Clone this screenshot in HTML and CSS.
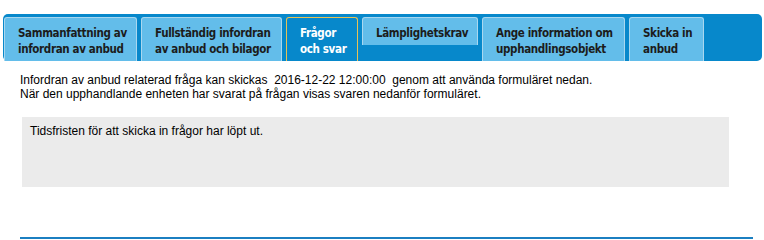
FILE: index.html
```html
<!DOCTYPE html>
<html lang="sv">
<head>
<meta charset="utf-8">
<title>Frågor och svar</title>
<link rel="stylesheet" href="styles.css">
</head>
<body>
<div class="page">
  <nav class="tabbar">
    <a class="tab tab-1" href="#">Sammanfattning av<br>infordran av anbud</a>
    <a class="tab tab-2" href="#">Fullständig infordran<br>av anbud och bilagor</a>
    <a class="tab tab-3 active" href="#">Frågor<br>och svar</a>
    <a class="tab tab-4" href="#">Lämplighetskrav</a>
    <a class="tab tab-5" href="#">Ange information om<br>upphandlingsobjekt</a>
    <a class="tab tab-6" href="#">Skicka in<br>anbud</a>
  </nav>
  <div class="content">
    <p class="intro">Infordran av anbud relaterad fråga kan skickas&nbsp; 2016-12-22 12:00:00&nbsp; genom att använda formuläret nedan.<br>När den upphandlande enheten har svarat på frågan visas svaren nedanför formuläret.</p>
    <div class="notice">Tidsfristen för att skicka in frågor har löpt ut.</div>
    <hr class="rule">
  </div>
</div>
</body>
</html>
```

FILE: styles.css
```css
html, body {
  margin: 0;
  padding: 0;
  background: #ffffff;
}

.page {
  width: 764px;
  padding-top: 14px;
  font-family: "Liberation Sans", Arial, sans-serif;
  font-size: 12px;
  color: #000;
}

.tabbar {
  display: flex;
  align-items: flex-start;
  gap: 4px;
  margin-left: 3px;
  width: 759px;
  box-sizing: border-box;
  padding: 3px 0 0 1px;
  background: #0788cb;
  border-radius: 5px;
}

.tab {
  box-sizing: border-box;
  display: block;
  overflow: hidden;
  padding: 7px 6px 4px 13px;
  background: #63bdea;
  border: 1px solid #a9d7ef;
  border-bottom: none;
  border-radius: 3px 3px 0 0;
  font-family: "DejaVu Sans Condensed", "DejaVu Sans", sans-serif;
  font-stretch: condensed;
  font-weight: bold;
  font-size: 11.5px;
  letter-spacing: -0.35px;
  line-height: 16px;
  color: #1c1c1c;
  text-decoration: none;
  white-space: nowrap;
}

.tab.active {
  background: #0788cb;
  border-color: #e9c254;
  color: #ffffff;
}

.tab-1 { width: 133px; }
.tab-2 { width: 141px; }
.tab-3 { width: 72px; }
.tab-4 { width: 116px; }
.tab-5 { width: 143px; }
.tab-6 { width: 75px; }

.content {
  padding: 12px 0 0 20px;
}

.intro {
  margin: 0;
  line-height: 14px;
}

.notice {
  margin: 16px 0 0 2px;
  width: 707px;
  height: 70px;
  box-sizing: border-box;
  padding: 7px 8px;
  background: #ebebeb;
  line-height: 14px;
}

.rule {
  margin: 50px 0 0 0;
  width: 733px;
  height: 2px;
  border: none;
  background: #1b7fc1;
}
```
